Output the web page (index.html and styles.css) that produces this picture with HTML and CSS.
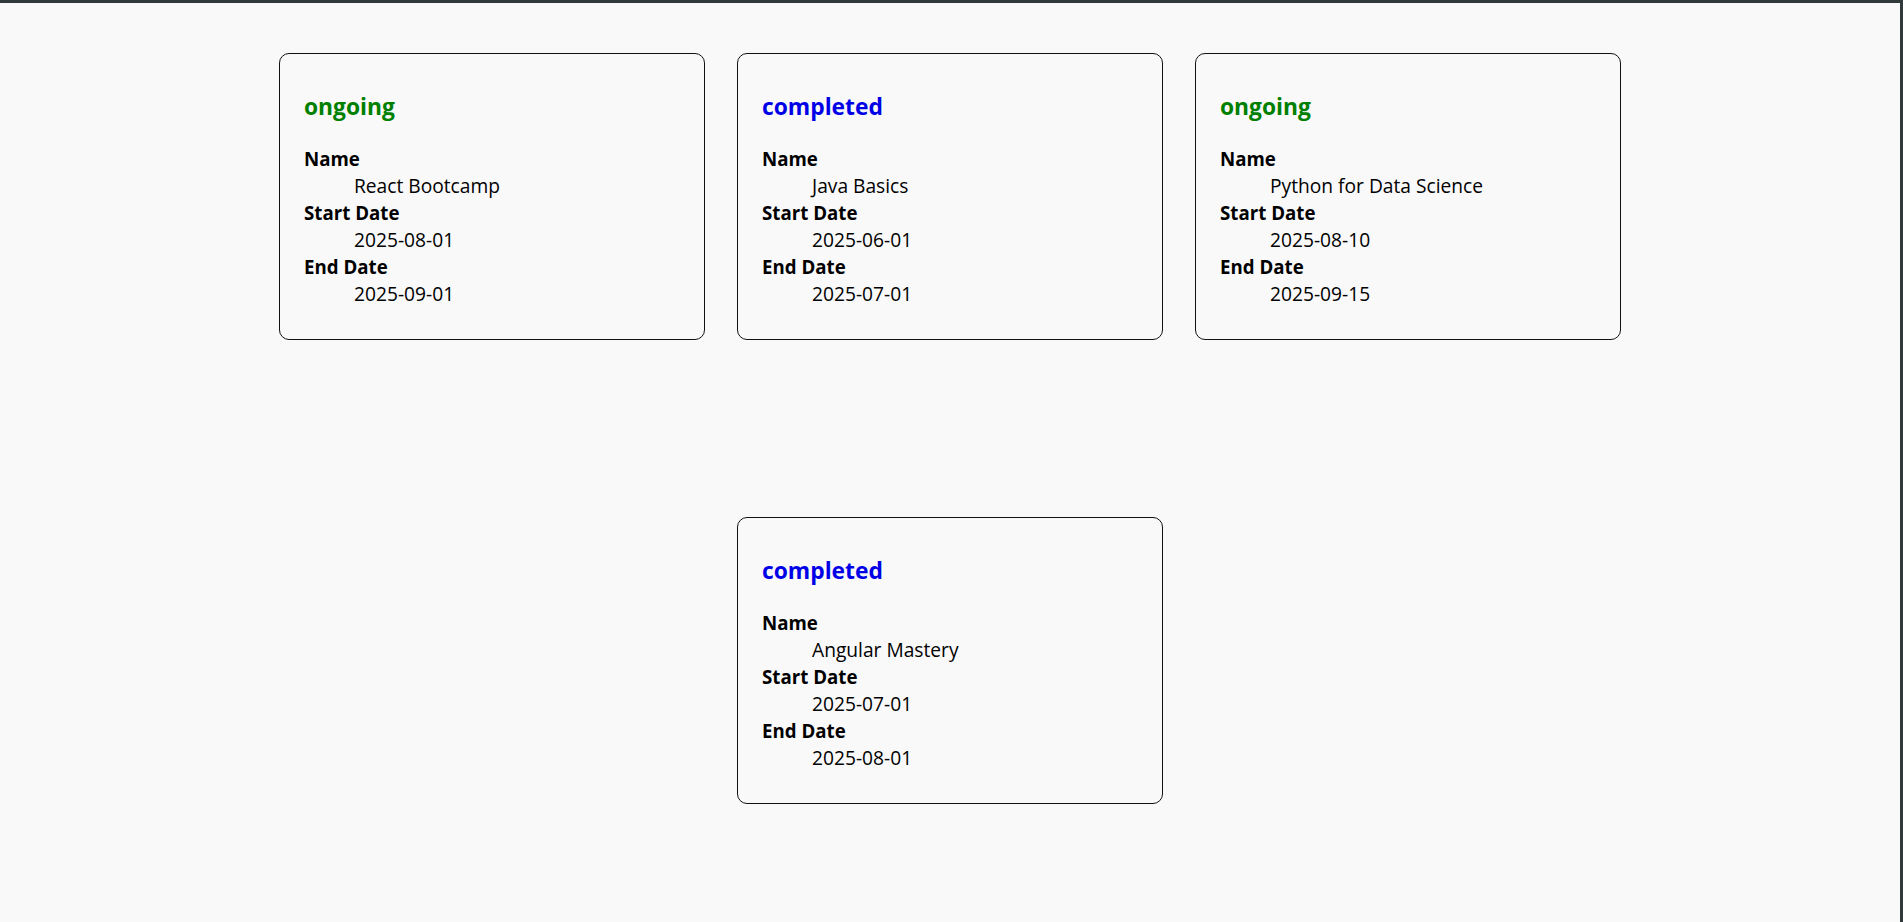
FILE: index.html
```html
<!DOCTYPE html>
<html lang="en">
<head>
<meta charset="utf-8">
<title>Courses</title>
<link rel="stylesheet" href="styles.css">
</head>
<body>
<main class="grid">
  <section class="card">
    <h2 class="status status-ongoing">ongoing</h2>
    <dl class="details">
      <dt>Name</dt><dd>React Bootcamp</dd>
      <dt>Start Date</dt><dd>2025-08-01</dd>
      <dt>End Date</dt><dd>2025-09-01</dd>
    </dl>
  </section>
  <section class="card">
    <h2 class="status status-completed">completed</h2>
    <dl class="details">
      <dt>Name</dt><dd>Java Basics</dd>
      <dt>Start Date</dt><dd>2025-06-01</dd>
      <dt>End Date</dt><dd>2025-07-01</dd>
    </dl>
  </section>
  <section class="card">
    <h2 class="status status-ongoing">ongoing</h2>
    <dl class="details">
      <dt>Name</dt><dd>Python for Data Science</dd>
      <dt>Start Date</dt><dd>2025-08-10</dd>
      <dt>End Date</dt><dd>2025-09-15</dd>
    </dl>
  </section>
  <section class="card">
    <h2 class="status status-completed">completed</h2>
    <dl class="details">
      <dt>Name</dt><dd>Angular Mastery</dd>
      <dt>Start Date</dt><dd>2025-07-01</dd>
      <dt>End Date</dt><dd>2025-08-01</dd>
    </dl>
  </section>
</main>
</body>
</html>
```
FILE: styles.css
```css
html {
  background: #f9f9f9;
}
body {
  margin: 0;
  min-height: 100vh;
  box-sizing: border-box;
  border-top: 3px solid #313a3a;
  border-right: 3px solid #313a3a;
  background: #f9f9f9;
  font-family: "Open Sans", "Noto Sans", sans-serif;
  color: #000;
}
.grid {
  display: flex;
  flex-wrap: wrap;
  justify-content: center;
  column-gap: 32px;
  row-gap: 177px;
  width: 1342px;
  margin: 0 auto;
  padding-top: 50px;
}
.card {
  box-sizing: border-box;
  width: 426px;
  border: 1px solid #111;
  border-radius: 10px;
  padding: 16px 24px 32px;
}
.status {
  margin: 22px 0 23px;
  font-size: 22.8px;
  line-height: 30px;
  font-weight: 700;
}
.status-ongoing { color: #008000; }
.status-completed { color: #0000e6; }
.details {
  margin: 0;
  font-size: 18.7px;
  line-height: 27px;
}
.details dt {
  font-weight: 700;
}
.details dd {
  margin-left: 50px;
  font-size: 19.2px;
}
```
